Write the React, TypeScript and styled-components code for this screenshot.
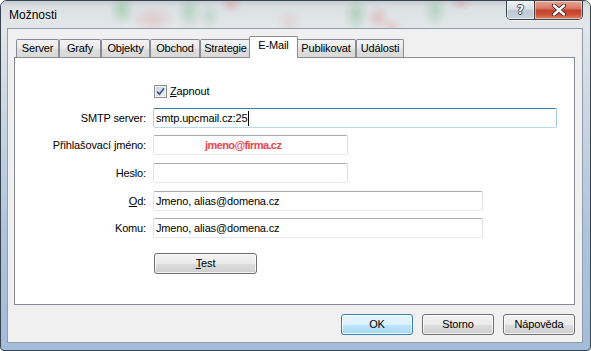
import React from "react";
import styled, { createGlobalStyle } from "styled-components";

const Global = createGlobalStyle`
  html, body { margin: 0; padding: 0; background: #fff; }
  body {
    width: 591px; height: 351px; overflow: hidden;
    font-family: "Liberation Sans", Arial, sans-serif;
    font-size: 11px;
    letter-spacing: -0.15px;
    color: #000;
  }
`;

const Window = styled.div`
  box-sizing: border-box;
  width: 591px;
  height: 351px;
  display: flex;
  flex-direction: column;
  border: 1px solid #39434e;
  border-radius: 7px 7px 4px 4px;
  overflow: hidden;
  background: linear-gradient(
    to bottom,
    #d6dce0 0px,
    #e2e6e9 28px,
    #cdd8e3 100px,
    #aec4dd 230px,
    #a3bcda 351px
  );
`;

const TitleBar = styled.div`
  height: 27px;
  display: flex;
  align-items: flex-start;
  flex-shrink: 0;
  background:
    radial-gradient(ellipse 13px 18px at 121px 8px, rgba(80, 170, 100, 0.3), transparent),
    radial-gradient(ellipse 24px 14px at 152px 18px, rgba(225, 125, 125, 0.24), transparent),
    radial-gradient(ellipse 13px 20px at 188px 10px, rgba(80, 170, 100, 0.26), transparent),
    radial-gradient(ellipse 12px 15px at 208px 15px, rgba(80, 170, 100, 0.18), transparent),
    radial-gradient(ellipse 12px 10px at 230px 3px, rgba(220, 110, 110, 0.28), transparent),
    radial-gradient(ellipse 14px 13px at 288px 21px, rgba(220, 125, 125, 0.16), transparent),
    radial-gradient(ellipse 13px 18px at 355px 13px, rgba(80, 170, 100, 0.3), transparent),
    radial-gradient(ellipse 12px 14px at 377px 17px, rgba(220, 110, 110, 0.26), transparent),
    radial-gradient(ellipse 11px 9px at 391px 25px, rgba(220, 110, 110, 0.2), transparent),
    radial-gradient(ellipse 13px 18px at 434px 9px, rgba(80, 170, 100, 0.26), transparent),
    radial-gradient(ellipse 12px 8px at 460px 2px, rgba(220, 110, 110, 0.26), transparent),
    linear-gradient(to bottom, #c7ced3 0px, #dbe0e3 6px, #e3e7e9 27px);
`;

const Title = styled.div`
  flex: 1;
  align-self: center;
  padding-left: 8px;
  font-size: 12px;
  line-height: 16px;
  letter-spacing: 0;
  color: #000;
  text-shadow: 0 0 6px rgba(255, 255, 255, 0.95);
`;

const CaptionGroup = styled.div`
  display: flex;
  margin-right: 7px;
  height: 18px;
  border: 1px solid #3a4551;
  border-top: none;
  border-radius: 0 0 5px 5px;
  overflow: hidden;
  box-shadow: 0 1px 0 rgba(255, 255, 255, 0.6);
`;

const CaptionButton = styled.div<{ $close?: boolean }>`
  width: ${(p) => (p.$close ? 47 : 27)}px;
  display: flex;
  align-items: center;
  justify-content: center;
  border-left: ${(p) => (p.$close ? "1px solid #4a3a3a" : "none")};
  background: ${(p) =>
    p.$close
      ? "linear-gradient(to bottom, #e7a597 0%, #d77a66 40%, #c4412c 52%, #cc4f37 75%, #e08a6d 100%)"
      : "linear-gradient(to bottom, #eef2f5 0%, #d9e0e6 45%, #bdc8d2 55%, #cbd4dd 100%)"};
  box-shadow: inset 0 0 0 1px rgba(255, 255, 255, 0.45);
`;

const HelpGlyph = styled.span`
  font-family: "DejaVu Sans", sans-serif;
  font-weight: bold;
  font-size: 12px;
  line-height: 12px;
  color: #fff;
  text-shadow:
    1px 0 0 #3b4650, -1px 0 0 #3b4650, 0 1px 0 #3b4650, 0 -1px 0 #3b4650;
`;

const Client = styled.div`
  flex: 1;
  margin: 0 7px 7px 6px;
  border: 1px solid #8f9cab;
  background: #f0f0f0;
  display: flex;
  flex-direction: column;
  padding: 7px 7px 7px 6px;
`;

const TabStrip = styled.div`
  display: flex;
  align-items: flex-end;
  height: 21px;
  padding-left: 2px;
  position: relative;
  z-index: 2;
  flex-shrink: 0;
`;

const Tab = styled.div<{ $active?: boolean; $w: number }>`
  box-sizing: border-box;
  width: ${(p) => (p.$active ? p.$w + 4 : p.$w)}px;
  height: ${(p) => (p.$active ? 22 : 18)}px;
  margin: ${(p) => (p.$active ? "0 -2px -1px" : "0")};
  border: 1px solid #898c95;
  border-bottom: none;
  border-radius: 2px 2px 0 0;
  background: ${(p) =>
    p.$active
      ? "#fff"
      : "linear-gradient(to bottom, #f3f3f3 0%, #ebebeb 45%, #dedede 55%, #d9d9d9 100%)"};
  position: relative;
  z-index: ${(p) => (p.$active ? 2 : 1)};
  text-align: center;
  line-height: 17px;
  white-space: nowrap;
`;

const Panel = styled.div`
  box-sizing: border-box;
  height: 248px;
  border: 1px solid #898c95;
  background: #fff;
  display: flex;
  flex-direction: column;
  padding-top: 23px;
  flex-shrink: 0;
`;

const Row = styled.div<{ $gap: number }>`
  display: flex;
  align-items: center;
  height: 20px;
  margin-top: ${(p) => p.$gap}px;
`;

const Label = styled.div`
  width: 131px;
  margin-right: 7px;
  text-align: right;
  line-height: 20px;
  white-space: nowrap;
`;

const TextBox = styled.div<{ $w: number; $focused?: boolean }>`
  box-sizing: border-box;
  width: ${(p) => p.$w}px;
  height: 20px;
  padding: 0 2px;
  border: 1px solid;
  border-radius: 2px;
  border-color: ${(p) =>
    p.$focused
      ? "#3d7bad #a4c9e3 #b7d9ed #b5cfe7"
      : "#abadb3 #dbdfe6 #e3e9ef #e2e3ea"};
  background: #fff;
  line-height: 18px;
  white-space: nowrap;
  display: flex;
  align-items: center;
`;

const Caret = styled.span`
  display: inline-block;
  width: 1px;
  height: 15px;
  background: #000;
  margin-left: 1px;
`;

const Watermark = styled.span`
  padding-left: 49px;
  color: #e8454d;
  font-weight: bold;
  letter-spacing: -0.6px;
`;

const CheckLine = styled.label`
  display: flex;
  align-items: center;
  margin-left: 1px;
  gap: 3px;
  line-height: 20px;
`;

const CheckBox = styled.span`
  box-sizing: border-box;
  width: 13px;
  height: 13px;
  border: 1px solid #8e8f8f;
  background: linear-gradient(135deg, #c9ced6 0%, #e2e5ea 50%, #f4f4f4 100%);
  box-shadow: inset 0 0 0 1px #f4f4f4;
  display: flex;
  align-items: center;
  justify-content: center;
`;

const Key = styled.u`
  text-decoration: underline;
  text-underline-offset: 1px;
`;

const PushButton = styled.button<{ $default?: boolean; $w: number }>`
  box-sizing: border-box;
  width: ${(p) => p.$w}px;
  height: 21px;
  padding: 0;
  border: 1px solid ${(p) => (p.$default ? "#3c7fb1" : "#707070")};
  border-radius: 3px;
  background: ${(p) =>
    p.$default
      ? "linear-gradient(to bottom, #eaf6fd 0%, #d9f0fc 50%, #bee6fd 51%, #a7d9f5 100%)"
      : "linear-gradient(to bottom, #f2f2f2 0%, #ebebeb 50%, #dddddd 51%, #cfcfcf 100%)"};
  box-shadow: inset 0 0 0 1px rgba(255, 255, 255, 0.75);
  font-family: "Liberation Sans", Arial, sans-serif;
  font-size: 11px;
  letter-spacing: -0.15px;
  line-height: 19px;
  color: #000;
`;

const TestButton = styled(PushButton)`
  margin-left: 1px;
`;

const ButtonRow = styled.div`
  display: flex;
  justify-content: flex-end;
  gap: 9px;
  margin-top: 9px;
  flex-shrink: 0;
`;

const tabs = [
  { label: "Server", w: 43 },
  { label: "Grafy", w: 42 },
  { label: "Objekty", w: 49 },
  { label: "Obchod", w: 50 },
  { label: "Strategie", w: 51 },
  { label: "E-Mail", w: 45, active: true },
  { label: "Publikovat", w: 60 },
  { label: "Události", w: 48 },
];

function CloseGlyph() {
  return (
    <svg width="16" height="12" viewBox="0 0 16 12">
      <path d="M3 1.5 L13 10.5 M13 1.5 L3 10.5" stroke="#3a2a2a" strokeWidth="4.2" strokeLinecap="round" />
      <path d="M3 1.5 L13 10.5 M13 1.5 L3 10.5" stroke="#fff" strokeWidth="2.4" strokeLinecap="round" />
    </svg>
  );
}

function CheckMark() {
  return (
    <svg width="9" height="9" viewBox="0 0 9 9">
      <path d="M1 4.5 L3.5 7.2 L8 1.2" fill="none" stroke="#3b5a9a" strokeWidth="1.8" />
    </svg>
  );
}

export default function App() {
  return (
    <>
      <Global />
      <Window>
        <TitleBar>
          <Title>Možnosti</Title>
          <CaptionGroup>
            <CaptionButton>
              <HelpGlyph>?</HelpGlyph>
            </CaptionButton>
            <CaptionButton $close>
              <CloseGlyph />
            </CaptionButton>
          </CaptionGroup>
        </TitleBar>
        <Client>
          <TabStrip>
            {tabs.map((t) => (
              <Tab key={t.label} $w={t.w} $active={t.active}>
                {t.label}
              </Tab>
            ))}
          </TabStrip>
          <Panel>
            <Row $gap={0}>
              <Label />
              <CheckLine>
                <CheckBox>
                  <CheckMark />
                </CheckBox>
                <span>
                  <Key>Z</Key>apnout
                </span>
              </CheckLine>
            </Row>
            <Row $gap={7}>
              <Label>SMTP server:</Label>
              <TextBox $w={404} $focused>
                smtp.upcmail.cz:25
                <Caret />
              </TextBox>
            </Row>
            <Row $gap={7}>
              <Label>Přihlašovací jméno:</Label>
              <TextBox $w={195}>
                <Watermark>jmeno@firma.cz</Watermark>
              </TextBox>
            </Row>
            <Row $gap={8}>
              <Label>Heslo:</Label>
              <TextBox $w={195} />
            </Row>
            <Row $gap={8}>
              <Label>
                <Key>O</Key>d:
              </Label>
              <TextBox $w={330}>Jmeno, alias@domena.cz</TextBox>
            </Row>
            <Row $gap={7}>
              <Label>Komu:</Label>
              <TextBox $w={330}>Jmeno, alias@domena.cz</TextBox>
            </Row>
            <Row $gap={15}>
              <Label />
              <TestButton $w={103}>
                <Key>T</Key>est
              </TestButton>
            </Row>
          </Panel>
          <ButtonRow>
            <PushButton $w={72} $default>
              OK
            </PushButton>
            <PushButton $w={72}>Storno</PushButton>
            <PushButton $w={72}>Nápověda</PushButton>
          </ButtonRow>
        </Client>
      </Window>
    </>
  );
}
